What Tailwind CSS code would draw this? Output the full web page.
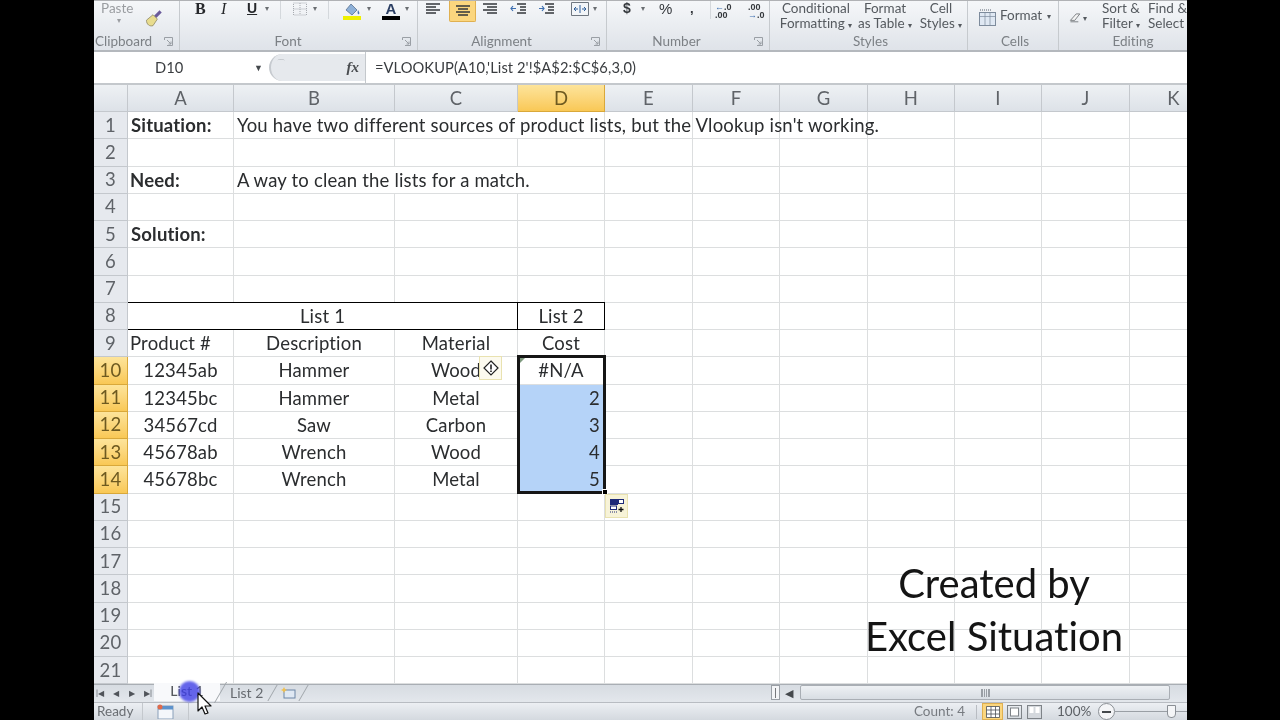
<!DOCTYPE html>
<html lang="en">
<head>
<meta charset="UTF-8">
<title>Excel Situation</title>
<script src="https://cdn.jsdelivr.net/npm/@tailwindcss/browser@4"></script>
</head>
<body class="bg-black w-[1280px] h-[720px] overflow-hidden font-['Lato',sans-serif] [font-variant-ligatures:none]">
<div class="relative ml-[94px] w-[1093px] h-[720px] bg-white flex flex-col overflow-hidden blur-[0.35px]">

  <!-- ribbon -->
  <div class="h-[52px] flex bg-gradient-to-b from-[#f5f7f9] to-[#dfe3e9] border-t border-t-[#b0b2b5] border-b-2 border-b-[#b4b8bd] text-[#5f6368] text-[13.500px] leading-[15px] shrink-0">
    <!-- clipboard -->
    <div class="w-[86px] flex flex-col border-r border-[#c6cace]">
      <div class="h-[31px] flex pl-[7px]">
        <div class="w-[36px] text-[#9a9da1]">Paste<div class="text-center text-[8px] leading-[8px]">▾</div></div>
        <svg class="mt-[5px] ml-[4px]" width="24" height="24" viewBox="0 0 22 22"><path d="M12 9l5-5 2 2-5 5z" fill="#6a5a9a"/><path d="M5 13l6-5 4 4-4 6c-3 1-6-1-6-5z" fill="#e8dc8e" stroke="#8a8460" stroke-width=".7"/></svg>
      </div>
      <div class="flex justify-between items-center pl-[1px] pr-[6px] mt-[2px] text-[#7c8085]"><span>Clipboard</span><svg width="9" height="9" viewBox="0 0 9 9"><path d="M.5 3V.500h8v8H3M3 3l4 4M7 4.500V7H4.500" fill="none" stroke="#9a9fa5"/></svg></div>
    </div>
    <!-- font -->
    <div class="w-[238px] flex flex-col border-r border-[#c6cace]">
      <div class="h-[31px] flex items-start pl-[15px] text-[#26282b]">
        <span class="w-[26px] font-['Liberation_Serif',serif] font-bold text-[16px]">B</span>
        <span class="w-[26px] font-['Liberation_Serif',serif] italic text-[16px]">I</span>
        <span class="w-[18px] font-['Liberation_Sans',sans-serif] font-bold text-[14px] underline">U</span>
        <span class="w-[15px] text-[8px] text-[#6a6e72]">▾</span>
        <span class="w-[6px] h-[18px] border-l border-[#d4d8dc]"></span>
        <svg class="w-[20px] ml-[4px]" width="16" height="16" viewBox="0 0 16 16"><path d="M1.500 2h13v12h-13zM8 2v12M1.500 8h13" fill="none" stroke="#a7abb0" stroke-dasharray="1 1"/></svg>
        <span class="w-[16px] text-[8px] text-[#6a6e72] pl-[3px]">▾</span>
        <span class="w-[6px] h-[18px] border-l border-[#d4d8dc] ml-[2px]"></span>
        <svg class="ml-[8px]" width="20" height="20" viewBox="0 0 18 20"><path d="M3 9l5-6 6 6-5 5z" fill="#8eb1d8" stroke="#5a7292" stroke-width=".8"/><path d="M15 9c1 2 2 3 1 4s-2-1-1-4z" fill="#4878b0"/><rect x="0" y="15" width="18" height="4" fill="#eef000"/></svg>
        <span class="w-[18px] text-[8px] text-[#6a6e72] pl-[5px]">▾</span>
        <span class="flex flex-col items-center w-[18px] ml-[2px] font-['Liberation_Sans',sans-serif] font-bold text-[15px] leading-[15px] text-[#2b3f63]">A<span class="w-[18px] h-[4px] bg-black"></span></span>
        <span class="text-[8px] text-[#6a6e72] pl-[5px]">▾</span>
      </div>
      <div class="flex items-center mt-[2px] text-[#7c8085]"><span class="flex-1 text-center pr-[6px]">Font</span><svg class="mr-[6px]" width="9" height="9" viewBox="0 0 9 9"><path d="M.5 3V.500h8v8H3M3 3l4 4M7 4.500V7H4.500" fill="none" stroke="#9a9fa5"/></svg></div>
    </div>
    <!-- alignment -->
    <div class="w-[189px] flex flex-col border-r border-[#c6cace]">
      <div class="h-[31px] flex items-start pl-[7px]">
        <svg width="16" height="16" viewBox="0 0 16 16"><path d="M1 3h14M1 6h10M1 9h14M1 12h10" stroke="#33373b" stroke-width="1.500"/></svg>
        <span class="w-[27px] h-[21px] ml-[8px] flex items-center justify-center rounded-b-[2px] bg-[#fbd67e] border border-[#e0b050] border-t-0">
          <svg width="16" height="16" viewBox="0 0 16 16"><path d="M1 3h14M3 6h10M1 9h14M3 12h10" stroke="#33373b" stroke-width="1.500"/></svg>
        </span>
        <svg class="ml-[6px]" width="16" height="16" viewBox="0 0 16 16"><path d="M1 3h14M5 6h10M1 9h14M5 12h10" stroke="#33373b" stroke-width="1.500"/></svg>
        <svg class="ml-[12px]" width="17" height="16" viewBox="0 0 17 16"><path d="M7 3h9M10 6h6M10 9h6M7 12h9" stroke="#33373b" stroke-width="1.300"/><path d="M6 7.500H1M3 5l-2 2.500L3 10" fill="none" stroke="#3d6fb0" stroke-width="1.200"/></svg>
        <svg class="ml-[11px]" width="17" height="16" viewBox="0 0 17 16"><path d="M7 3h9M10 6h6M10 9h6M7 12h9" stroke="#33373b" stroke-width="1.300"/><path d="M1 7.500h5M4 5l2 2.500L4 10" fill="none" stroke="#3d6fb0" stroke-width="1.200"/></svg>
        <svg class="ml-[16px]" width="18" height="16" viewBox="0 0 18 16"><path d="M.5 1.500h17v13H.5z" fill="#f2f5f8" stroke="#6f7780"/><path d="M3 8h4M11 8h4M5 6L3 8l2 2M13 6l2 2-2 2M9 4v8" fill="none" stroke="#2f5f9a"/></svg>
        <span class="text-[8px] text-[#6a6e72] pl-[4px]">▾</span>
      </div>
      <div class="flex items-center mt-[2px] text-[#7c8085]"><span class="flex-1 text-center pr-[6px]">Alignment</span><svg class="mr-[6px]" width="9" height="9" viewBox="0 0 9 9"><path d="M.5 3V.500h8v8H3M3 3l4 4M7 4.500V7H4.500" fill="none" stroke="#9a9fa5"/></svg></div>
    </div>
    <!-- number -->
    <div class="w-[163px] flex flex-col border-r border-[#c6cace]">
      <div class="h-[31px] flex items-start pl-[16px] text-[#33373b] font-['Liberation_Sans',sans-serif] text-[13px]">
        <span class="w-[18px] font-bold text-[14px]">$</span>
        <span class="w-[18px] text-[8px] text-[#6a6e72]">▾</span>
        <span class="w-[31px] text-[15px] leading-[15px]">%</span>
        <span class="w-[20px] font-bold">,</span>
        <span class="h-[18px] border-l border-[#d4d8dc] w-[5px]"></span>
        <span class="w-[33px] text-[9px] leading-[8px] font-bold pt-[2px]"><span class="text-[#3d6fb0]">←</span>.0<br>.00</span>
        <span class="text-[9px] leading-[8px] font-bold pt-[2px]">.00<br><span class="text-[#3d6fb0]">→</span>.0</span>
      </div>
      <div class="flex items-center mt-[2px] text-[#7c8085]"><span class="flex-1 text-center pr-[8px]">Number</span><svg class="mr-[6px]" width="9" height="9" viewBox="0 0 9 9"><path d="M.5 3V.500h8v8H3M3 3l4 4M7 4.500V7H4.500" fill="none" stroke="#9a9fa5"/></svg></div>
    </div>
    <!-- styles -->
    <div class="w-[198px] flex flex-col border-r border-[#c6cace]">
      <div class="h-[31px] flex text-center text-[#555a5f] whitespace-nowrap">
        <span class="w-[76px] ml-[8px]">Conditional<br>Formatting <span class="text-[8px]">▾</span></span>
        <span class="w-[60px] ml-[1px]">Format<br>as Table <span class="text-[8px]">▾</span></span>
        <span class="w-[44px] ml-[4px]">Cell<br>Styles <span class="text-[8px]">▾</span></span>
      </div>
      <div class="text-center mt-[2px] pl-[4px] text-[#7c8085]">Styles</div>
    </div>
    <!-- cells -->
    <div class="w-[91px] flex flex-col border-r border-[#c6cace]">
      <div class="h-[31px] flex items-start pt-[8px] pl-[10px] text-[#555a5f]">
        <svg width="19" height="18" viewBox="0 0 19 18"><rect x="1.500" y="3.500" width="16" height="13" fill="#dfe8f3" stroke="#7d8b9c"/><path d="M1.500 7.500h16M7 3.500v13M12 3.500v13" stroke="#7d8b9c" stroke-width=".7"/><path d="M2 1h12" stroke="#55606c" stroke-dasharray="1 1"/></svg>
        <span class="ml-[3px] -mt-[1px]">Format</span><span class="text-[8px] ml-[5px]">▾</span>
      </div>
      <div class="text-center mt-[2px] pl-[4px] text-[#7c8085]">Cells</div>
    </div>
    <!-- editing -->
    <div class="flex-1 flex flex-col overflow-hidden">
      <div class="h-[31px] flex text-[#555a5f] pl-[10px]">
        <svg class="mt-[8px]" width="19" height="17" viewBox="0 0 18 16"><path d="M2 12l8-9h5l-7 9H2z" fill="#f4f4f4" stroke="#55595e"/><path d="M2 14h11" stroke="#55595e"/></svg>
        <span class="text-[8px] ml-[1px] mt-[10px]">▾</span>
        <span class="ml-[15px] w-[40px] text-center whitespace-nowrap">Sort &amp;<br>Filter <span class="text-[8px]">▾</span></span>
        <span class="ml-[8px] whitespace-nowrap">Find &amp;<br>Select</span>
      </div>
      <div class="text-center mt-[2px] pl-[20px] text-[#7c8085]">Editing</div>
    </div>
  </div>

  <!-- formula bar -->
  <div class="h-[33px] flex items-center bg-white border-b-2 border-[#c4c8cc] shrink-0 text-[14.700px] text-[#3a3d40]">
    <div class="w-[160px] pl-[61px]">D10</div>
    <span class="text-[9px] text-[#44484c]">▼</span>
    <div class="ml-[6px] w-[96px] h-[27px] rounded-l-[14px] bg-[#e6e9ed] border-l-2 border-[#c6cacf] flex items-center">
      <span class="ml-[5px] mb-[8px] text-[#aeb2b7] text-[10px]">⌒</span>
      <span class="ml-auto mr-[6px] font-['Liberation_Serif',serif] italic font-bold text-[15px] text-[#4a4d50]">fx</span>
    </div>
    <div class="border-l border-[#c4c8cc] h-full pl-[9px] flex items-center tracking-[0.08px]">=VLOOKUP(A10,'List 2'!$A$2:$C$6,3,0)</div>
  </div>

  <!-- sheet -->
  <div id="sheet" class="grid grid-cols-[34px_106px_161px_123px_87px_88px_87px_88px_87px_87px_88px_88px] grid-rows-[27px] auto-rows-[27.25px] text-[18.500px] tracking-[0.18px] text-[#2b2d2f] leading-[27px] shrink-0"></div>

  <!-- selection -->
  <div class="absolute left-[423px] top-[355px] w-[89px] h-[139px] border-[3px] border-[#161616]"></div>
  <div class="absolute left-[426px] top-[358px] w-0 h-0 border-t-[5px] border-r-[5px] border-t-[#7f9a7f] border-r-transparent"></div>
  <div class="absolute left-[508px] top-[489px] w-[6px] h-[6px] bg-black border border-white"></div>
  <div class="absolute left-[385px] top-[356px] w-[23px] h-[24px] bg-[#f7f3d8]/40 border border-[#e9e2b0] flex items-center justify-center">
    <svg width="16" height="16" viewBox="0 0 16 16"><path d="M8 1l7 7-7 7-7-7z" fill="#fff" stroke="#222" stroke-width="1.200"/><path d="M8 4.500v5M8 10.500v1.500" stroke="#222" stroke-width="1.600"/></svg>
  </div>
  <div class="absolute left-[511px] top-[494px] w-[23px] h-[24px] bg-[#f7f3d8] border border-[#e9e2b0] flex items-center justify-center">
    <svg width="16" height="16" viewBox="0 0 16 16"><rect x="1" y="1" width="8" height="6" fill="#1e2a78"/><rect x="9.500" y="1.500" width="5" height="4" fill="#fff" stroke="#1e2a78"/><rect x="1.500" y="8" width="6" height="3.500" fill="#fff" stroke="#1e2a78"/><path d="M1 14h7" stroke="#1e2a78" stroke-dasharray="1 1"/><path d="M12 9v5M9.500 11.500h5" stroke="#111" stroke-width="1.300"/></svg>
  </div>

  <!-- watermark -->
  <div class="absolute left-[740px] top-[557px] w-[320px] text-center text-[40px] leading-[53px] text-[#141414]">Created by<br>Excel Situation</div>

  <!-- tabs and scrollbar -->
  <div class="h-[18px] flex items-center pb-[2px] bg-gradient-to-b from-[#d7dce2] to-[#e3e7ec] border-t border-[#a9aeb4] shrink-0 text-[14px] text-[#676b70]">
    <div class="w-[60px] flex justify-between items-center px-[2px] text-[8px] text-[#50545a]"><span>|◀</span><span>◀</span><span>▶</span><span>▶|</span></div>
    <div class="w-[66px] h-[18px] -mt-[1px] bg-[#f8f9fb] text-center leading-[16px] text-[#55595e] font-medium">List 1</div>
    <div class="w-[52px] text-center border-l border-[#a0a5aa] -skew-x-[30deg]"><span class="inline-block skew-x-[30deg]">List 2</span></div>
    <div class="w-[32px] h-[16px] border-x border-[#a0a5aa] -skew-x-[30deg] flex items-center justify-center">
      <svg class="skew-x-[30deg]" width="16" height="14" viewBox="0 0 16 14"><rect x="4" y="4" width="11" height="8" fill="#dfe8f3" stroke="#6d86a6"/><path d="M4 1l1 2 2 1-2 1-1 2-1-2-2-1 2-1z" fill="#f0c050"/></svg>
    </div>
    <div class="ml-[467px] w-[9px] h-[15px] bg-[#f4f5f7] border border-[#9a9fa5] flex justify-center"><span class="mt-[2px] w-[1px] h-[10px] bg-[#77797c]"></span></div>
    <span class="ml-[5px] text-[11px] text-[#44484c] w-[15px]">◀</span>
    <div class="w-[370px] h-[15px] bg-gradient-to-b from-[#eef1f4] to-[#d8dde3] border border-[#a9aeb4] rounded-[2px] flex items-center justify-center">
      <span class="w-[9px] h-[8px] border-x border-[#9a9fa5] bg-[repeating-linear-gradient(90deg,#9a9fa5_0,#9a9fa5_1px,transparent_1px,transparent_2px)]"></span>
    </div>
  </div>

  <!-- status bar -->
  <div class="flex-1 min-h-0 flex items-center bg-gradient-to-b from-[#eceff3] to-[#d4d9df] border-t border-[#b8bcc2] text-[13.500px] leading-[15px] text-[#6a6e73]">
    <span class="ml-[3px] w-[45px]">Ready</span>
    <div class="h-full w-[47px] border-x border-[#c4c8cd] flex items-center justify-center">
      <svg width="17" height="15" viewBox="0 0 17 15"><rect x="1" y="2" width="15" height="13" fill="#f4f7fb" stroke="#8aa0ba"/><rect x="1" y="2" width="15" height="3.500" fill="#5d92cc"/><circle cx="3" cy="3" r="2.500" fill="#e06a4a"/></svg>
    </div>
    <span class="ml-auto text-[#777b80]">Count: 4</span>
    <span class="ml-[11px] h-[14px] border-l border-[#b8bcc2]"></span>
    <div class="ml-[5px] w-[21px] h-[17px] bg-[#fbd67e] border border-[#e0b050] flex items-center justify-center">
      <svg width="14" height="12" viewBox="0 0 14 12"><path d="M.5.500h13v11H.5zM.5 4h13M.5 8h13M5 .500v11M9.500 .500v11" fill="#fff" stroke="#4a4f55" stroke-width=".8"/></svg>
    </div>
    <svg class="ml-[4px]" width="15" height="14" viewBox="0 0 15 14"><rect x=".5" y=".5" width="14" height="13" fill="none" stroke="#7e8388"/><rect x="3.500" y="3" width="8" height="8" fill="#fff" stroke="#7e8388"/></svg>
    <svg class="ml-[5px]" width="15" height="14" viewBox="0 0 15 14"><rect x=".5" y=".5" width="14" height="13" fill="#d4d8dd" stroke="#7e8388"/><rect x="2.500" y="2" width="4" height="6" fill="#fff"/><rect x="8.500" y="2" width="4" height="6" fill="#fff"/></svg>
    <span class="ml-[15px] w-[36px] text-[#5c6065]">100%</span>
    <div class="ml-[5px] w-[17px] h-[17px] rounded-full bg-[#f4f5f7] border border-[#8a8f95] flex items-center justify-center"><span class="w-[9px] h-[2px] bg-[#44484c]"></span></div>
    <div class="h-px bg-[#9a9fa5] w-[72px] flex items-center">
      <span class="ml-[52px] w-[9px] h-[13px] bg-[#f4f5f7] border border-[#8a8f95] rounded-b-[4px]"></span>
    </div>
  </div>

  <!-- video cursor with click highlight -->
  <div class="absolute left-[85px] top-[681px] w-[21px] h-[21px] rounded-full bg-[#3f3fe6]/80 blur-[1px]"></div>
  <svg class="absolute left-[103px] top-[692px]" width="15" height="25" viewBox="0 0 15 25"><path d="M1 1v18l4-4 3 7 3-1-3-7h6z" fill="#fff" stroke="#111" stroke-width="1.200" stroke-linejoin="round"/></svg>
</div>

<script>
  // colonnes : en-tete de ligne + A..K
  const cols = ['', 'A', 'B', 'C', 'D', 'E', 'F', 'G', 'H', 'I', 'J', 'K'];
  const rows = {
    1: { A: ['Situation:', 'font-bold pl-[3px]'], B: ['You have two different sources of product lists, but the Vlookup isn\'t working.', 'pl-[3px] whitespace-nowrap overflow-visible z-10'] },
    3: { A: ['Need:', 'font-bold pl-[2px]'], B: ['A way to clean the lists for a match.', 'pl-[3px] whitespace-nowrap overflow-visible z-10'] },
    5: { A: ['Solution:', 'font-bold pl-[3px]'] },
    9: { A: ['Product #', 'pl-[2px]'], B: ['Description', 'text-center'], C: ['Material', 'text-center'], D: ['Cost', 'text-center'] },
    10: { A: ['12345ab', 'text-center'], B: ['Hammer', 'text-center'], C: ['Wood', 'text-center'], D: ['#N/A', 'text-center'] },
    11: { A: ['12345bc', 'text-center'], B: ['Hammer', 'text-center'], C: ['Metal', 'text-center'], D: ['2', 'text-right pr-[4px] bg-[#b5d3f8] border-[#b5d3f8]!'] },
    12: { A: ['34567cd', 'text-center'], B: ['Saw', 'text-center'], C: ['Carbon', 'text-center'], D: ['3', 'text-right pr-[4px] bg-[#b5d3f8] border-[#b5d3f8]!'] },
    13: { A: ['45678ab', 'text-center'], B: ['Wrench', 'text-center'], C: ['Wood', 'text-center'], D: ['4', 'text-right pr-[4px] bg-[#b5d3f8] border-[#b5d3f8]!'] },
    14: { A: ['45678bc', 'text-center'], B: ['Wrench', 'text-center'], C: ['Metal', 'text-center'], D: ['5', 'text-right pr-[4px] bg-[#b5d3f8] border-[#b5d3f8]!'] }
  };
  const cell = 'border-r border-b border-[#dcdedf]';
  let html = '';

  cols.forEach(c => {
    const on = c === 'D';
    html += `<div class="flex items-center justify-center border-r border-b ${on ? 'bg-gradient-to-b from-[#fde49a] to-[#f9c855] border-[#d9a83a] text-[#6e5a20]' : 'bg-gradient-to-b from-[#eef1f4] to-[#dde2e8] border-[#c4c8cd] text-[#5f6368]'}">${c}</div>`;
  });

  for (let r = 1; r <= 21; r++) {
    const on = r >= 10 && r <= 14;
    html += `<div class="flex items-center justify-center border-r border-b ${on ? 'bg-gradient-to-b from-[#fde49a] to-[#f9c855] border-[#d9a83a] text-[#6e5a20]' : 'bg-[#e6e9ee] border-[#c4c8cd] text-[#5f6368]'}">${r}</div>`;
    if (r === 8) {
      html += '<div class="col-span-3 text-center border-y border-r border-black -mt-px">List 1</div>';
      html += '<div class="text-center border-y border-r border-black -mt-px">List 2</div>';
      cols.slice(5).forEach(() => { html += `<div class="${cell}"></div>`; });
      continue;
    }
    cols.slice(1).forEach(c => {
      const [text, cls] = (rows[r] && rows[r][c]) || ['', ''];
      const border = r === 1 || r === 3 ? (c === 'B' || c === 'C' ? 'border-b border-[#dcdedf]' : cell) : cell;
      html += `<div class="${border} ${cls}">${text}</div>`;
    });
  }
  document.getElementById('sheet').innerHTML = html;
</script>
</body>
</html>
